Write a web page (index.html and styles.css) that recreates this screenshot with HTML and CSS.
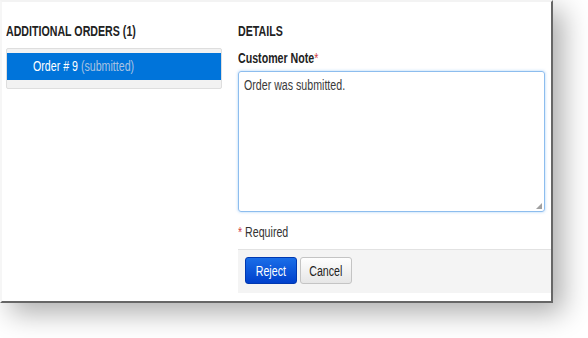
FILE: index.html
```html
<!DOCTYPE html>
<html>
<head>
<meta charset="utf-8">
<link rel="stylesheet" href="styles.css">
</head>
<body>
<div class="stage">
<div class="panel">
  <div class="col-left">
    <h2 class="heading"><span class="t">ADDITIONAL ORDERS (1)</span></h2>
    <div class="list">
      <div class="row selected"><span class="t">Order # 9 <span class="status">(submitted)</span></span></div>
    </div>
  </div>
  <div class="col-right">
    <h2 class="heading"><span class="t">DETAILS</span></h2>
    <label class="label"><span class="t">Customer Note<span class="req">*</span></span></label>
    <div class="textarea"><span class="t">Order was submitted.</span><span class="grip"></span></div>
    <div class="required"><span class="t"><span class="req">*</span> Required</span></div>
    <div class="footer">
      <button class="btn btn-primary"><span class="t tc">Reject</span></button>
      <button class="btn btn-default"><span class="t tc">Cancel</span></button>
    </div>
  </div>
</div>
</div>
</body>
</html>
```
FILE: styles.css
```css
html, body {
  margin: 0;
  padding: 0;
  background: #fff;
}
body {
  font-family: "Liberation Sans", Arial, sans-serif;
  color: #333;
}
.stage {
  width: 588px;
  height: 338px;
  overflow: hidden;
  background: #fff;
}
.t {
  display: inline-block;
  white-space: nowrap;
  transform: scaleX(0.76);
  transform-origin: 0 50%;
}
.t.tc {
  transform-origin: 50% 50%;
}
.panel {
  box-sizing: border-box;
  width: 553px;
  height: 303px;
  background: #fff;
  border-top: 2px solid #f3f3f3;
  border-left: 2px solid #f6f6f6;
  border-right: 2px solid #666;
  border-bottom: 2px solid #666;
  box-shadow: 10px 10px 26px rgba(0,0,0,0.32);
  display: flex;
}
.col-left {
  width: 216px;
  padding-left: 4px;
}
.col-right {
  flex: 1;
  margin-left: 16px;
  display: flex;
  flex-direction: column;
}
.col-right > * {
  flex-shrink: 0;
}
.heading {
  margin: 21px 0 0;
  font-size: 14px;
  line-height: 16px;
  font-weight: bold;
  color: #222;
}
.list {
  margin-top: 9px;
  height: 41px;
  box-sizing: border-box;
  background: #f2f2f2;
  border: 1px solid #dedede;
  border-radius: 2px;
  padding-top: 4px;
}
.row {
  height: 27px;
  line-height: 27px;
  padding-left: 26px;
  font-size: 14px;
}
.row.selected {
  background: #0074da;
  color: #fff;
}
.status {
  color: #a9c3e2;
}
.label {
  display: block;
  margin-top: 11px;
  font-size: 14px;
  line-height: 16px;
  font-weight: bold;
  color: #222;
}
.req {
  color: #d04040;
  font-weight: normal;
}
.textarea {
  position: relative;
  box-sizing: border-box;
  margin-top: 5px;
  width: 307px;
  height: 141px;
  border: 1px solid #8dbdee;
  border-radius: 3px;
  box-shadow: 0 0 3px rgba(100,170,240,0.55);
  padding: 4px 5px;
  font-size: 14px;
  line-height: 18px;
  color: #3a3a3a;
}
.grip {
  position: absolute;
  right: 2px;
  bottom: 2px;
  width: 6px;
  height: 6px;
  background:
    radial-gradient(circle, #999 0.7px, transparent 0.8px) 0 0 / 2px 2px;
  clip-path: polygon(100% 0, 100% 100%, 0 100%);
}
.required {
  margin-top: 12px;
  font-size: 14px;
  line-height: 16px;
  color: #333;
}
.footer {
  margin-top: 9px;
  height: 44px;
  box-sizing: border-box;
  background: #f4f4f4;
  border-top: 1px solid #e2e2e2;
  padding: 7px 0 0 7px;
  display: flex;
  gap: 3px;
  align-items: flex-start;
}
.btn {
  height: 27px;
  width: 52px;
  border-radius: 3px;
  font-family: inherit;
  font-size: 14px;
  padding: 0;
  cursor: pointer;
}
.btn-primary {
  background: linear-gradient(#1a6ee8, #0040cc);
  border: 1px solid #0038b0;
  color: #fff;
}
.btn-default {
  background: linear-gradient(#fefefe, #e6e6e6);
  border: 1px solid #c4c4c4;
  color: #222;
}
```
